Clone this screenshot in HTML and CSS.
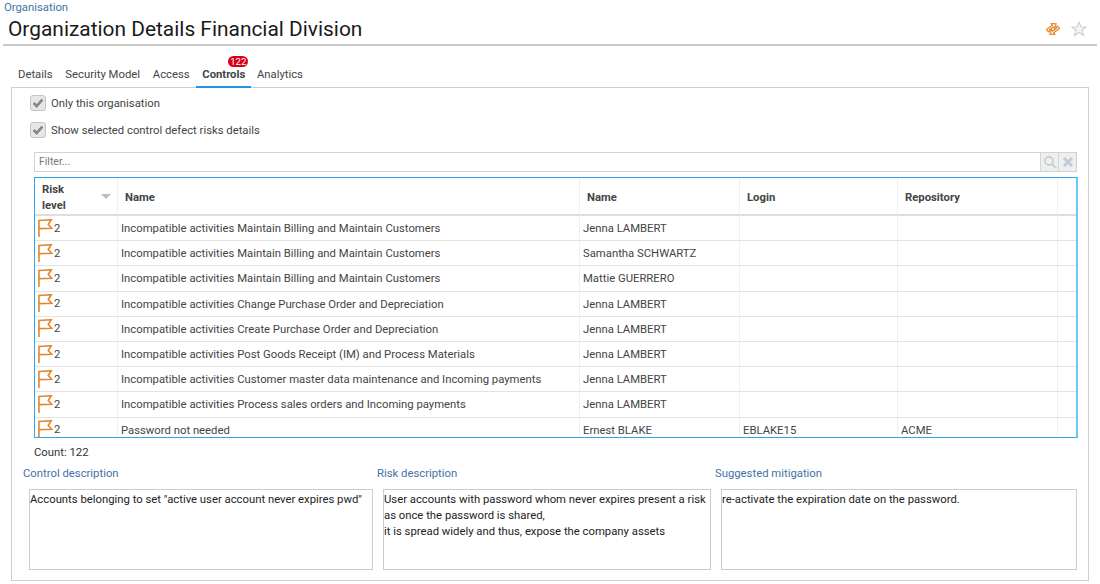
FILE: index.html
```html
<!DOCTYPE html>
<html lang="en">
<head>
<meta charset="utf-8">
<title>Organization Details Financial Division</title>
<link rel="stylesheet" href="styles.css">
</head>
<body>
<svg class="defs" width="0" height="0" aria-hidden="true">
  <symbol id="flag" viewBox="0 0 16 19">
    <path d="M1.6 19V1.6L14.6 0.8L11.4 5.8L15 9.8L1.6 10.2" fill="none" stroke="#e0872f" stroke-width="1.7"/>
  </symbol>
  <symbol id="check" viewBox="0 0 14 14">
    <path d="M2.6 7L5.6 10L11.4 3.6" fill="none" stroke="#858585" stroke-width="2.6"/>
  </symbol>
</svg>
<header class="page-head">
  <a class="crumb">Organisation</a>
  <div class="title-row">
    <h1 class="title">Organization Details Financial Division</h1>
    <div class="head-icons">
      <svg class="sync" width="16" height="16" viewBox="0 0 16 16"><g fill="#fff1dc" stroke="#e2862a" stroke-width="1.15" transform="rotate(-35 8 8)"><path d="M2.5 7.6V4.6H9.6V2.6L13.6 5.5L9.6 8.4V6.6H4.8V7.6Z"/><path d="M13.5 8.4V11.4H6.4V13.4L2.4 10.5L6.4 7.6V9.4H11.2V8.4Z"/></g></svg>
      <svg class="star" width="16" height="16" viewBox="0 0 16 16"><path d="M8 1.3L10 6H15L11 9.2L12.4 14.5L8 11.5L3.6 14.5L5 9.2L1 6H6Z" fill="#f4f4f4" stroke="#cfcfcf" stroke-width="1.1"/></svg>
    </div>
  </div>
</header>
<nav class="tabs">
  <a class="tab">Details</a>
  <a class="tab">Security Model</a>
  <a class="tab">Access</a>
  <a class="tab active">Controls<span class="badge">122</span></a>
  <a class="tab">Analytics</a>
</nav>
<main class="panel">
  <div class="check-row"><span class="check"><svg width="14" height="14"><use href="#check"/></svg></span><span class="check-label">Only this organisation</span></div>
  <div class="check-row second"><span class="check"><svg width="14" height="14"><use href="#check"/></svg></span><span class="check-label">Show selected control defect risks details</span></div>
  <div class="filter">
    <span class="filter-text">Filter...</span>
    <span class="filter-btn"><svg width="14" height="14" viewBox="0 0 14 14"><circle cx="6" cy="6" r="4" fill="none" stroke="#c5d0d8" stroke-width="1.8"/><path d="M9 9L13 13" stroke="#c5d0d8" stroke-width="2.2"/></svg></span>
    <span class="filter-btn"><svg width="12" height="12" viewBox="0 0 12 12"><path d="M2 2L10 10M10 2L2 10" stroke="#c0ccd6" stroke-width="3"/></svg></span>
  </div>
  <div class="grid-wrap">
    <table class="grid">
      <colgroup><col class="c-risk"><col class="c-name"><col class="c-person"><col class="c-login"><col class="c-repo"><col class="c-end"></colgroup>
      <thead>
        <tr>
          <th class="risk-head"><span>Risk<br>level</span><i class="sort"></i></th>
          <th>Name</th><th>Name</th><th>Login</th><th>Repository</th><th></th>
        </tr>
      </thead>
      <tbody>
        <tr><td class="risk"><svg width="16" height="18"><use href="#flag"/></svg>2</td><td>Incompatible activities Maintain Billing and Maintain Customers</td><td>Jenna LAMBERT</td><td></td><td></td><td></td></tr>
        <tr><td class="risk"><svg width="16" height="18"><use href="#flag"/></svg>2</td><td>Incompatible activities Maintain Billing and Maintain Customers</td><td>Samantha SCHWARTZ</td><td></td><td></td><td></td></tr>
        <tr><td class="risk"><svg width="16" height="18"><use href="#flag"/></svg>2</td><td>Incompatible activities Maintain Billing and Maintain Customers</td><td>Mattie GUERRERO</td><td></td><td></td><td></td></tr>
        <tr><td class="risk"><svg width="16" height="18"><use href="#flag"/></svg>2</td><td>Incompatible activities Change Purchase Order and Depreciation</td><td>Jenna LAMBERT</td><td></td><td></td><td></td></tr>
        <tr><td class="risk"><svg width="16" height="18"><use href="#flag"/></svg>2</td><td>Incompatible activities Create Purchase Order and Depreciation</td><td>Jenna LAMBERT</td><td></td><td></td><td></td></tr>
        <tr><td class="risk"><svg width="16" height="18"><use href="#flag"/></svg>2</td><td>Incompatible activities Post Goods Receipt (IM) and Process Materials</td><td>Jenna LAMBERT</td><td></td><td></td><td></td></tr>
        <tr><td class="risk"><svg width="16" height="18"><use href="#flag"/></svg>2</td><td>Incompatible activities Customer master data maintenance and Incoming payments</td><td>Jenna LAMBERT</td><td></td><td></td><td></td></tr>
        <tr><td class="risk"><svg width="16" height="18"><use href="#flag"/></svg>2</td><td>Incompatible activities Process sales orders and Incoming payments</td><td>Jenna LAMBERT</td><td></td><td></td><td></td></tr>
        <tr><td class="risk"><svg width="16" height="18"><use href="#flag"/></svg>2</td><td>Password not needed</td><td>Ernest BLAKE</td><td>EBLAKE15</td><td>ACME</td><td></td></tr>
      </tbody>
    </table>
  </div>
  <div class="count">Count: 122</div>
  <section class="details">
    <div class="detail d1"><h2 class="detail-label">Control description</h2><div class="detail-box">Accounts belonging to set "active user account never expires pwd"</div></div>
    <div class="detail d2"><h2 class="detail-label">Risk description</h2><div class="detail-box">User accounts with password whom never expires present a risk as once the password is shared,<br>it is spread widely and thus, expose the company assets</div></div>
    <div class="detail d3"><h2 class="detail-label">Suggested mitigation</h2><div class="detail-box">re-activate the expiration date on the password.</div></div>
  </section>
</main>
</body>
</html>
```
FILE: styles.css
```css
* { box-sizing: border-box; }
html, body { margin: 0; padding: 0; }
body {
  width: 1100px;
  height: 584px;
  overflow: hidden;
  background: #fff;
  font-family: Roboto, "Liberation Sans", sans-serif;
  font-size: 11.3px;
  color: #333;
}
.defs { position: absolute; }
.page-head { margin: 0 3px; height: 46px; border-bottom: 2px solid #c9c9c9; }
.crumb { display: block; height: 14px; line-height: 15px; padding-left: 1px; color: #4472a8; }
.title-row { display: flex; align-items: center; justify-content: space-between; height: 30px; }
.title { margin: 0; padding-left: 5px; font-size: 20.9px; font-weight: 400; line-height: 30px; color: #1a1a1a; }
.head-icons { display: flex; gap: 10px; align-items: center; padding-right: 10px; }
.tabs { display: flex; height: 41px; padding: 20px 0 0 11.6px; }
.tab { position: relative; height: 21px; line-height: 18px; padding: 0 6.4px; color: #444; }
.tab.active { font-weight: 700; border-bottom: 2px solid #2196e3; height: 22px; padding: 0 6px; margin: 0 -0.8px 0 0.2px; }
.badge {
  position: absolute; top: -10px; left: 32px; width: 20px; height: 11px; border-radius: 6px;
  background: #d9001b; color: #fff; font-size: 9.5px; font-weight: 400; line-height: 11px; text-align: center;
}
.panel { margin: 0 11px; width: 1078px; height: 494px; border: 1px solid #cfcfcf; padding: 0 10px 0 0; }
.check-row { display: flex; align-items: center; height: 16px; margin: 7px 0 0 18px; gap: 5px; line-height: 16px; color: #444; }
.check-row.second { margin-top: 11px; }
.check-label { padding-top: 1px; }
.check { display: flex; align-items: center; justify-content: center; width: 16px; height: 16px; border: 1px solid #c4c4c4; border-radius: 3px; background: #e6e6e6; }
.filter { display: flex; height: 20px; margin: 14px 1px 0 22px; border: 1px solid #d2d2d2; }
.filter-text { flex: 1; padding-left: 4px; line-height: 18px; font-size: 10.5px; color: #777; }
.filter-btn { display: flex; align-items: center; justify-content: center; width: 18px; background: #efefef; border-left: 1px solid #d6d6d6; }
.grid-wrap {
  height: 261px; margin: 5px 0 0 22px; overflow: hidden;
  border: 1px solid #2aa7ee; border-right: 2px solid #6cc5f5;
}
.grid { width: 1041px; table-layout: fixed; border-collapse: separate; border-spacing: 0; }
.c-risk { width: 83px; } .c-name { width: 462px; } .c-person { width: 160px; }
.c-login { width: 158px; } .c-repo { width: 160px; } .c-end { width: 18px; }
.grid th {
  height: 38px; padding: 3px 0 0 7px; text-align: left; font-size: 11.3px; line-height: 16px; font-weight: 700;
  color: #444; border-right: 1px solid #f0f0f0; border-bottom: 2px solid #dedede;
}
.grid th:last-child, .grid td:last-child { border-right: 0; }
.risk-head { position: relative; }
.risk-head span { display: block; }
.sort {
  position: absolute; right: 6px; top: 16px; width: 0; height: 0;
  border-left: 5px solid transparent; border-right: 5px solid transparent; border-top: 5px solid #bdbdbd;
}
.grid td {
  height: 25.2px; padding: 1px 0 0 3px; font-size: 11.3px; color: #444; white-space: nowrap; overflow: hidden;
  border-right: 1px solid #f0f0f0; border-bottom: 1px solid #e3e3e3;
}
.grid td.risk { padding-left: 2px; }
.risk svg { vertical-align: middle; margin: -3px 1px -1px 0; }
.count { height: 14px; margin: 8px 0 0 22px; line-height: 14px; color: #333; }
.details { display: flex; margin-top: 7px; }
.detail-label { margin: 0; height: 15px; line-height: 14px; font-size: 11.3px; font-weight: 400; color: #4472a8; }
.detail-box {
  height: 81px; margin-top: 7px; padding: 2px 0 0 0; border: 1px solid #cccccc;
  font-size: 11.3px; line-height: 16px; color: #222;
}
.d1 { width: 365px; padding-left: 11px; }
.d1 .detail-box { width: 344px; margin-left: 6px; }
.d2 { width: 338px; }
.d2 .detail-box { width: 328px; margin-left: 6px; }
.d3 { width: 362px; }
.d3 .detail-box { width: 356px; margin-left: 6px; }
```
